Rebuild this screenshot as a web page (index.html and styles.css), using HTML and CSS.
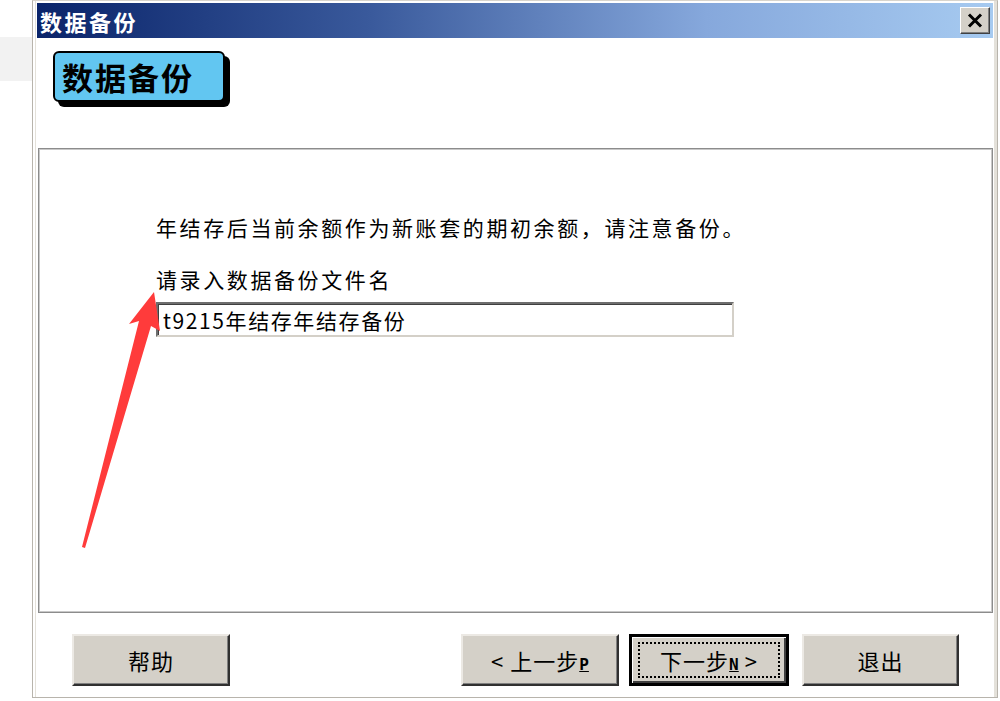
FILE: index.html
```html
<!DOCTYPE html>
<html lang="zh-CN">
  <head>
    <meta charset="UTF-8" />
    <title>数据备份</title>
    <link rel="stylesheet" href="styles.css">
  </head>
  <body>
    <div class="side">
      <div class="side-band"></div>
    </div>
    <div class="dialog">
      <div class="titlebar">
        <span class="title">数据备份</span>
        <button class="close" type="button">
          <svg width="16" height="15" viewBox="0 0 16 15">
            <path d="M2 1.5 L14 13.5 M14 1.5 L2 13.5" stroke="#000" stroke-width="3" fill="none" />
          </svg>
        </button>
      </div>
      <div class="header">
        <div class="badge">数据备份</div>
      </div>
      <div class="panel">
        <div class="notice">年结存后当前余额作为新账套的期初余额，请注意备份。</div>
        <label class="field-label" for="filename">请录入数据备份文件名</label>
        <input class="field" id="filename" type="text" value="t9215年结存年结存备份" />
      </div>
      <div class="footer">
        <button class="btn help" type="button">帮助</button>
        <button class="btn prev" type="button">&lt; 上一步<u class="key">P</u></button>
        <button class="btn next default" type="button"><span class="focus">下一步<u class="key">N</u>&nbsp;&gt;</span></button>
        <button class="btn quit" type="button">退出</button>
      </div>
    </div>

    <svg class="arrow" width="180" height="560" viewBox="0 0 180 560">
      <polygon points="154,292 160,331 151,326 85,548 82,547 139,321 129,324" fill="#ff3b3b" />
    </svg>
  </body>
</html>
```

FILE: styles.css
```css
* {
  box-sizing: border-box;
}

body {
  margin: 0;
  display: flex;
  background-color: #ffffff;
  font-family: "Noto Sans CJK SC", "DejaVu Sans", sans-serif;
  color: #000000;
  height: 701px;
  overflow: hidden;
}

.side {
  width: 32px;
  flex: none;
}

.side-band {
  margin-top: 37px;
  height: 44px;
  background-color: #f2f2f2;
}

.dialog {
  width: 966px;
  height: 698px;
  flex: none;
  display: flex;
  flex-direction: column;
  border: 1px solid #b8b4ac;
  border-top-color: #d8d4cc;
  padding: 2px 4px 0 4px;
  box-shadow: inset 2px 0 0 #ffffff, inset 3px 0 0 #e4e1da, inset -3px 0 0 #e4e1da;
  background-color: #ffffff;
}

.titlebar {
  height: 35px;
  flex: none;
  display: flex;
  align-items: center;
  justify-content: space-between;
  padding: 0 3px 0 3px;
  background: linear-gradient(to right, #0a246a 0%, #3a5a9c 35%, #86a8dc 70%, #a6caf0 100%);
}

.title {
  color: #ffffff;
  font-size: 22px;
  font-weight: bold;
  letter-spacing: 2.5px;
}

.close {
  width: 30px;
  height: 27px;
  padding: 0;
  display: flex;
  align-items: center;
  justify-content: center;
  background-color: #d4d0c8;
  border: 1px solid;
  border-color: #ffffff #404040 #404040 #ffffff;
  box-shadow: inset -1px -1px 0 #808080;
}

.header {
  height: 110px;
  flex: none;
  padding: 13px 0 0 16px;
}

.badge {
  width: 172px;
  height: 51px;
  display: flex;
  align-items: center;
  padding-left: 7px;
  background-color: #62c6f1;
  border: 2px solid #000000;
  border-radius: 6px;
  box-shadow: 5px 5px 0 #000000;
  font-size: 31px;
  font-weight: bold;
  letter-spacing: 2px;
  line-height: 1;
}

.panel {
  height: 465px;
  flex: none;
  margin-left: 1px;
  display: flex;
  flex-direction: column;
  align-items: flex-start;
  padding: 65px 0 0 117px;
  border: 1px solid #8c8c8c;
  box-shadow: inset 1px 1px 0 #c8c8c8, inset -1px -1px 0 #c8c8c8;
  font-size: 21px;
  letter-spacing: 2.6px;
  line-height: 26px;
}

.field-label {
  margin-top: 26px;
}

.field {
  margin-top: 10px;
  width: 578px;
  height: 35px;
  padding: 0 0 0 5px;
  font-family: "Noto Sans CJK SC", "DejaVu Sans", sans-serif;
  font-size: 21px;
  letter-spacing: 1.6px;
  color: #000000;
  background-color: #ffffff;
  border: 2px solid;
  border-color: #6e6e6e #d4d0c8 #d4d0c8 #6e6e6e;
  box-shadow: inset 1px 1px 0 #404040;
  outline: none;
}

.footer {
  flex: 1;
  display: flex;
  align-items: flex-start;
  padding: 21px 0 0 35px;
}

.btn {
  width: 158px;
  height: 52px;
  padding: 0;
  font-family: "Noto Sans CJK SC", "DejaVu Sans", sans-serif;
  font-size: 22px;
  letter-spacing: 1px;
  color: #000000;
  background-color: #d4d0c8;
  border: 2px solid;
  border-color: #ece9e4 #303030 #303030 #ece9e4;
  box-shadow: inset -1px -1px 0 #808080;
}

.prev {
  margin-left: 231px;
}

.next {
  margin-left: 10px;
  width: 160px;
}

.quit {
  margin-left: 13px;
  width: 157px;
}

.default {
  border: 3px solid #000000;
  box-shadow: inset 1px 1px 0 #ffffff, inset -2px -2px 0 #404040;
  padding: 5px 6px;
}

.focus {
  display: block;
  height: 100%;
  line-height: 32px;
  text-align: center;
  border: 2px dotted #000000;
}

.key {
  font-family: "DejaVu Sans Mono", monospace;
  font-size: 16px;
  font-weight: bold;
  letter-spacing: 0;
}

.arrow {
  position: absolute;
  left: 0;
  top: 0;
  pointer-events: none;
}
```
